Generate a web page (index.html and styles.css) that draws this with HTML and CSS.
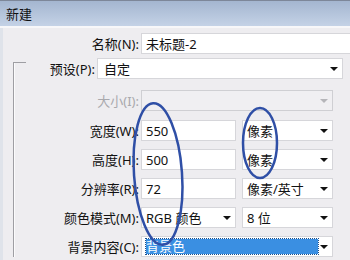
FILE: index.html
```html
<!DOCTYPE html>
<html lang="zh-CN">
<head>
  <meta charset="UTF-8">
  <title>新建</title>
  <link rel="stylesheet" href="styles.css">
</head>
<body>
  <div class="dialog">
    <div class="titlebar">新建</div>
    <div class="dialog-body">
      <div class="row row-name">
        <label class="lbl">名称(N):</label>
        <div class="field field-name">未标题-2</div>
      </div>
      <div class="group">
        <div class="row row-preset">
          <label class="lbl">预设(P):</label>
          <div class="field select sel-preset">自定<span class="arrow"></span></div>
        </div>
        <div class="row row-size">
          <label class="lbl disabled">大小(I):</label>
          <div class="field select sel-wide disabled-field"><span class="arrow gray"></span></div>
        </div>
        <div class="row">
          <label class="lbl">宽度(W):</label>
          <div class="field num">550</div>
          <div class="field select sel-unit">像素<span class="arrow"></span></div>
        </div>
        <div class="row">
          <label class="lbl">高度(H):</label>
          <div class="field num">500</div>
          <div class="field select sel-unit">像素<span class="arrow"></span></div>
        </div>
        <div class="row">
          <label class="lbl">分辨率(R):</label>
          <div class="field num">72</div>
          <div class="field select sel-unit">像素/英寸<span class="arrow"></span></div>
        </div>
        <div class="row">
          <label class="lbl">颜色模式(M):</label>
          <div class="field select num">RGB 颜色<span class="arrow"></span></div>
          <div class="field select sel-unit">8 位<span class="arrow"></span></div>
        </div>
        <div class="row">
          <label class="lbl">背景内容(C):</label>
          <div class="field select sel-wide"><span class="hl">背景色</span><span class="arrow"></span></div>
        </div>
      </div>
    </div>
  </div>

  <!-- 标注的蓝色椭圆 -->
  <svg class="marks" width="350" height="260" viewBox="0 0 350 260">
    <ellipse cx="158" cy="174" rx="24" ry="71" transform="rotate(-4 158 174)"/>
    <ellipse cx="260" cy="143" rx="17" ry="35"/>
  </svg>
</body>
</html>
```

FILE: styles.css
```css
body {
  margin: 0;
  width: 350px;
  height: 260px;
  overflow: hidden;
  background: #eeedf0;
  font-family: "Noto Sans", "Noto Sans CJK SC", sans-serif;
  font-size: 13px;
  color: #111;
  position: relative;
}
.dialog {
  width: 350px;
  height: 260px;
  border-left: 3px solid #dfe3ea;
  box-sizing: border-box;
}
.titlebar {
  height: 25px;
  line-height: 26px;
  background: linear-gradient(#a4b6d0, #c4d2e6);
  border-top: 1px solid #7d8799;
  border-bottom: 2px solid #f7f7f9;
  margin-left: -3px;
  padding-left: 6px;
  font-size: 13px;
}
.dialog-body {
  padding-top: 5px;
}
.row {
  display: flex;
  align-items: center;
  height: 21px;
  margin-bottom: 8px;
}
.lbl {
  width: 125px;
  text-align: right;
  padding-right: 2px;
  flex: none;
  white-space: nowrap;
}
.lbl.disabled {
  color: #a9a9ad;
}
.row-name .lbl {
  width: 136px;
}
.field {
  height: 21px;
  line-height: 21px;
  box-sizing: border-box;
  background: #fff;
  border: 1px solid #d6d6da;
  padding-left: 4px;
  flex: none;
  position: relative;
  white-space: nowrap;
}
.field-name {
  width: 220px;
}
.group {
  margin-left: 10px;
  border-left: 1px solid #9e9ea3;
  box-shadow: 1px 0 0 #fbfbfc inset;
  position: relative;
  padding-top: 1px;
}
.group::before {
  content: "";
  position: absolute;
  left: 0;
  top: 0;
  width: 12px;
  border-top: 1px solid #9e9ea3;
}
.row-preset {
  margin-top: -5px;
  margin-bottom: 11px;
}
.row-preset .lbl {
  width: 81px;
}
.row-size {
  margin-bottom: 9px;
}
.sel-preset {
  width: 246px;
  padding-left: 6px;
}
.sel-wide {
  width: 192px;
}
.disabled-field {
  background: #f0eff2;
  border-color: #cfcfd3;
}
.num {
  width: 95px;
}
.sel-unit {
  width: 91px;
  margin-left: 6px;
}
.arrow {
  position: absolute;
  right: 4px;
  top: 8px;
  width: 0;
  height: 0;
  border-left: 4px solid transparent;
  border-right: 4px solid transparent;
  border-top: 4px solid #111;
}
.arrow.gray {
  border-top-color: #b5b5b9;
}
.hl {
  display: inline-block;
  background: #3a8fe2;
  color: #fff;
  width: 172px;
  height: 15px;
  line-height: 15px;
  vertical-align: 1px;
  outline: 1px dotted #1d4f8a;
}
.marks {
  position: absolute;
  left: 0;
  top: 0;
}
.marks ellipse {
  fill: none;
  stroke: #2f4fa6;
  stroke-width: 2.5;
}
```
